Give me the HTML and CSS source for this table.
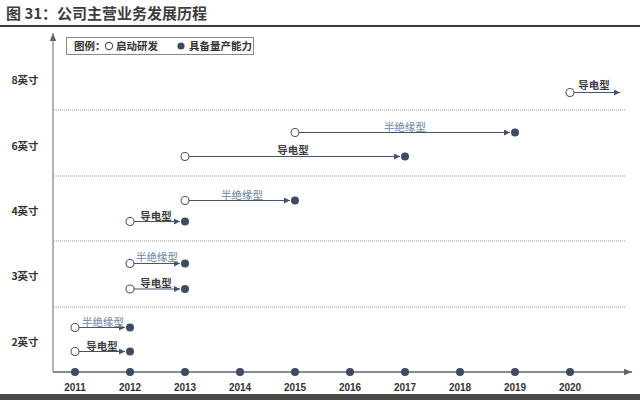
FILE: index.html
```html
<!DOCTYPE html>
<html lang="zh">
<head>
<meta charset="utf-8">
<title>公司主营业务发展历程</title>
<link rel="stylesheet" href="styles.css">
</head>
<body>
<div class="page">
  <header class="title-bar">
    <h1 class="title">图 31：公司主营业务发展历程</h1>
  </header>
  <svg class="chart" viewBox="0 27 640 367" width="640" height="367">
    <defs>
      <marker id="arr" viewBox="0 0 10 10" refX="10" refY="5" markerWidth="6" markerHeight="6" orient="auto" markerUnits="userSpaceOnUse">
        <path d="M0,0 L10,5 L0,10 z" class="arrow-fill"/>
      </marker>
      <marker id="axarr" viewBox="0 0 10 10" refX="10" refY="5" markerWidth="8" markerHeight="8" orient="auto" markerUnits="userSpaceOnUse">
        <path d="M0,1 L10,5 L0,9 z" class="axis-arrow"/>
      </marker>
    </defs>

    <!-- gridlines -->
    <line class="grid" x1="54" y1="110" x2="625" y2="110"/>
    <line class="grid" x1="54" y1="176" x2="625" y2="176"/>
    <line class="grid" x1="54" y1="241" x2="625" y2="241"/>
    <line class="grid" x1="54" y1="307" x2="625" y2="307"/>

    <!-- axes -->
    <line class="yaxis" x1="53" y1="372" x2="53" y2="33" marker-end="url(#axarr)"/>
    <line class="xaxis" x1="53" y1="372" x2="632" y2="372" marker-end="url(#axarr)"/>

    <!-- legend -->
    <rect class="legend-box" x="66.5" y="37.5" width="187" height="17"/>
    <text class="legend-text" x="74" y="50">图例：</text>
    <circle class="hollow" cx="109" cy="46" r="3.6"/>
    <text class="legend-text" x="116" y="50">启动研发</text>
    <circle class="solid" cx="181" cy="46" r="3.6"/>
    <text class="legend-text" x="189" y="50">具备量产能力</text>

    <!-- y labels -->
    <text class="ylab" x="25" y="84">8英寸</text>
    <text class="ylab" x="25" y="150">6英寸</text>
    <text class="ylab" x="25" y="215">4英寸</text>
    <text class="ylab" x="25" y="280">3英寸</text>
    <text class="ylab" x="25" y="346">2英寸</text>

    <!-- year dots -->
    <circle class="solid" cx="75" cy="372" r="4"/>
    <circle class="solid" cx="130" cy="372" r="4"/>
    <circle class="solid" cx="185" cy="372" r="4"/>
    <circle class="solid" cx="240" cy="372" r="4"/>
    <circle class="solid" cx="295" cy="372" r="4"/>
    <circle class="solid" cx="350" cy="372" r="4"/>
    <circle class="solid" cx="405" cy="372" r="4"/>
    <circle class="solid" cx="460" cy="372" r="4"/>
    <circle class="solid" cx="515" cy="372" r="4"/>
    <circle class="solid" cx="570" cy="372" r="4"/>

    <!-- year labels -->
    <text class="year" x="75" y="391">2011</text>
    <text class="year" x="130" y="391">2012</text>
    <text class="year" x="185" y="391">2013</text>
    <text class="year" x="240" y="391">2014</text>
    <text class="year" x="295" y="391">2015</text>
    <text class="year" x="350" y="391">2016</text>
    <text class="year" x="405" y="391">2017</text>
    <text class="year" x="460" y="391">2018</text>
    <text class="year" x="515" y="391">2019</text>
    <text class="year" x="570" y="391">2020</text>

    <!-- 8 inch -->
    <line class="seg" x1="574" y1="92.5" x2="620" y2="92.5" marker-end="url(#arr)"/>
    <circle class="hollow" cx="570" cy="92.5" r="4"/>
    <text class="lab dark" x="594" y="89">导电型</text>

    <!-- 6 inch semi -->
    <line class="seg" x1="299" y1="132.5" x2="510" y2="132.5" marker-end="url(#arr)"/>
    <circle class="hollow" cx="295" cy="132.5" r="4"/>
    <circle class="solid" cx="515" cy="132.5" r="4"/>
    <text class="lab light" x="405" y="131">半绝缘型</text>

    <!-- 6 inch cond -->
    <line class="seg" x1="189" y1="156.5" x2="400" y2="156.5" marker-end="url(#arr)"/>
    <circle class="hollow" cx="185" cy="156.5" r="4"/>
    <circle class="solid" cx="405" cy="156.5" r="4"/>
    <text class="lab dark" x="293" y="154">导电型</text>

    <!-- 4 inch semi -->
    <line class="seg" x1="189" y1="200.5" x2="290" y2="200.5" marker-end="url(#arr)"/>
    <circle class="hollow" cx="185" cy="200.5" r="4"/>
    <circle class="solid" cx="295" cy="200.5" r="4"/>
    <text class="lab light" x="242" y="199">半绝缘型</text>

    <!-- 4 inch cond -->
    <line class="seg" x1="134" y1="221.5" x2="180" y2="221.5" marker-end="url(#arr)"/>
    <circle class="hollow" cx="130" cy="221.5" r="4"/>
    <circle class="solid" cx="185" cy="221.5" r="4"/>
    <text class="lab dark" x="156" y="219.5">导电型</text>

    <!-- 3 inch semi -->
    <line class="seg" x1="134" y1="263.5" x2="180" y2="263.5" marker-end="url(#arr)"/>
    <circle class="hollow" cx="130" cy="263.5" r="4"/>
    <circle class="solid" cx="185" cy="263.5" r="4"/>
    <text class="lab light" x="157" y="260.5">半绝缘型</text>

    <!-- 3 inch cond -->
    <line class="seg" x1="134" y1="289" x2="180" y2="289" marker-end="url(#arr)"/>
    <circle class="hollow" cx="130" cy="289" r="4"/>
    <circle class="solid" cx="185" cy="289" r="4"/>
    <text class="lab dark" x="156" y="286.5">导电型</text>

    <!-- 2 inch semi -->
    <line class="seg" x1="79" y1="327.5" x2="125" y2="327.5" marker-end="url(#arr)"/>
    <circle class="hollow" cx="75" cy="327.5" r="4"/>
    <circle class="solid" cx="130" cy="327.5" r="4"/>
    <text class="lab light" x="103" y="325.5">半绝缘型</text>

    <!-- 2 inch cond -->
    <line class="seg" x1="79" y1="351.5" x2="125" y2="351.5" marker-end="url(#arr)"/>
    <circle class="hollow" cx="75" cy="351.5" r="4"/>
    <circle class="solid" cx="130" cy="351.5" r="4"/>
    <text class="lab dark" x="102" y="349.5">导电型</text>
  </svg>
  <div class="bottom-band"></div>
</div>
</body>
</html>
```

FILE: styles.css
```css
html, body {
  margin: 0;
  padding: 0;
  background: #ffffff;
}

.page {
  width: 640px;
  height: 400px;
  display: flex;
  flex-direction: column;
  overflow: hidden;
  font-family: "Noto Sans CJK SC", "Noto Sans", sans-serif;
}

.title-bar {
  height: 25px;
  border-bottom: 2px solid #3a3a3a;
  display: flex;
  align-items: center;
  padding-left: 6px;
}

.title {
  margin: 0;
  font-size: 15px;
  font-weight: 700;
  color: #3d3d3d;
  line-height: 25px;
}

.chart {
  display: block;
  flex: none;
}

.bottom-band {
  flex: 1;
  background: #4a4a4a;
}

.grid {
  stroke: #9a9a9a;
  stroke-width: 1.2;
  stroke-dasharray: 1 1;
}

.yaxis {
  stroke: #8a8a8a;
  stroke-width: 1.3;
}

.xaxis {
  stroke: #5d6676;
  stroke-width: 1.3;
}

.axis-arrow {
  fill: #5d6676;
}

.arrow-fill {
  fill: #44546a;
}

.seg {
  stroke: #44546a;
  stroke-width: 1.1;
}

.hollow {
  fill: #ffffff;
  stroke: #4f5766;
  stroke-width: 1.1;
}

.solid {
  fill: #3e4b62;
}

.legend-box {
  fill: #ffffff;
  stroke: #8a8a8a;
  stroke-width: 1;
}

.legend-text {
  font-family: "Noto Sans CJK SC", sans-serif;
  font-size: 10.5px;
  font-weight: 700;
  fill: #333333;
}

.ylab {
  font-family: "Noto Sans CJK SC", sans-serif;
  font-size: 10.5px;
  font-weight: 700;
  fill: #333333;
  text-anchor: middle;
}

.year {
  font-family: "Liberation Sans", "Noto Sans", sans-serif;
  font-size: 10px;
  font-weight: 700;
  fill: #333333;
  text-anchor: middle;
}

.lab {
  font-family: "Noto Sans CJK SC", sans-serif;
  font-size: 10.5px;
  text-anchor: middle;
}

.lab.dark {
  fill: #3f3f3f;
  font-weight: 700;
}

.lab.light {
  fill: #8497b0;
  font-weight: 500;
}
```
